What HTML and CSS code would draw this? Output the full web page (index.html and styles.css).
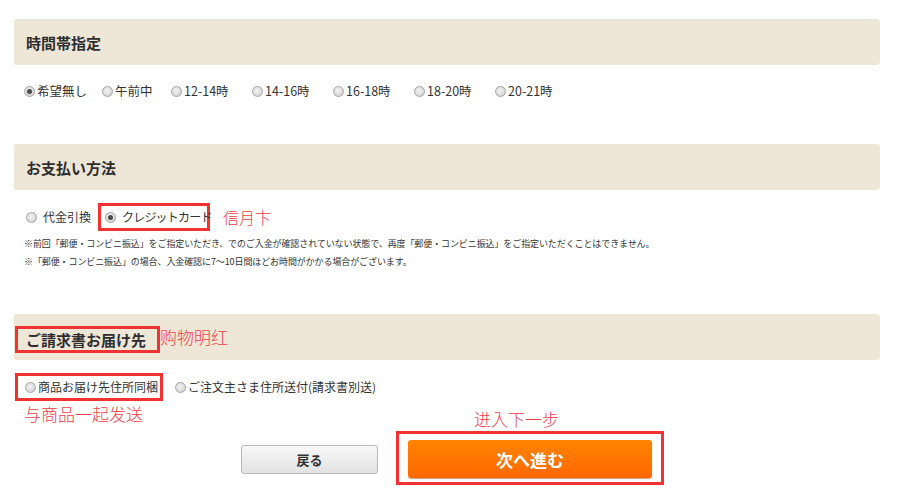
FILE: index.html
```html
<!DOCTYPE html>
<html lang="ja">
<head>
<meta charset="utf-8">
<link rel="stylesheet" href="styles.css">
</head>
<body>
<div class="page">
  <div class="hdr">時間帯指定</div>
  <div class="times">
    <label class="opt"><span class="radio on"></span>希望無し</label>
    <label class="opt"><span class="radio"></span>午前中</label>
    <label class="opt"><span class="radio"></span>12-14時</label>
    <label class="opt"><span class="radio"></span>14-16時</label>
    <label class="opt"><span class="radio"></span>16-18時</label>
    <label class="opt"><span class="radio"></span>18-20時</label>
    <label class="opt"><span class="radio"></span>20-21時</label>
  </div>

  <div class="hdr">お支払い方法</div>
  <div class="pay">
    <label class="opt sp"><span class="radio"></span>代金引換</label>
    <div class="mark mark-card"><label class="opt sp"><span class="radio on"></span>クレジットカード</label></div>
    <span class="note-cn cn-card">信月卞</span>
  </div>
  <div class="notes">
    <p>※前回「郵便・コンビニ振込」をご指定いただき、でのご入金が確認されていない状態で、再度「郵便・コンビニ振込」をご指定いただくことはできません。</p>
    <p>※「郵便・コンビニ振込」の場合、入金確認に7～10日間ほどお時間がかかる場合がございます。</p>
  </div>

  <div class="hdr hdr-bill">
    <div class="mark mark-title">ご請求書お届け先</div>
    <span class="note-cn">购物明红</span>
  </div>
  <div class="bill">
    <div class="mark mark-bill"><label class="opt"><span class="radio"></span>商品お届け先住所同梱</label></div>
    <label class="opt"><span class="radio"></span>ご注文主さま住所送付(請求書別送)</label>
  </div>
  <div class="note-cn cn-bill">与商品一起发送</div>

  <div class="actions">
    <button class="btn-back">戻る</button>
    <div class="mark mark-next">
      <span class="note-cn cn-next">进入下一步</span>
      <button class="btn-next">次へ進む</button>
    </div>
  </div>
</div>
</body>
</html>
```

FILE: styles.css
```css
* { box-sizing: border-box; }
body {
  margin: 0;
  background: #fff;
  color: #333;
  font-family: "Noto Sans CJK JP", "Noto Sans", sans-serif;
}
p { margin: 0; }
.page {
  width: 900px;
  padding: 19px 20px 0 14px;
}
.hdr {
  height: 46px;
  background: #eee6d6;
  border-radius: 2px 4px 4px 2px;
  display: flex;
  align-items: center;
  padding-left: 12px;
  font-size: 15px;
  font-weight: 700;
  color: #2e2e2e;
}
.opt {
  display: inline-flex;
  align-items: center;
  font-size: 12px;
  line-height: 18px;
  color: #333;
  white-space: nowrap;
}
.opt.sp .radio { margin-right: 6px; }
.radio {
  width: 11px;
  height: 11px;
  border-radius: 50%;
  border: 1px solid #a8a8a8;
  background: radial-gradient(circle at 45% 40%, #f4f4f4 0%, #d6d6d6 70%, #c4c4c4 100%);
  margin-right: 2px;
  position: relative;
  flex: none;
}
.radio.on::after {
  content: "";
  position: absolute;
  left: 2px;
  top: 2px;
  width: 5px;
  height: 5px;
  border-radius: 50%;
  background: #4a4a4a;
}
.times {
  display: grid;
  grid-template-columns: 78px 69px 81px 81px 81px 81px auto;
  padding-left: 10px;
  margin: 17px 0 44px;
  height: 18px;
}
.times .opt { font-size: 12.5px; }
.pay {
  display: flex;
  align-items: center;
  height: 28px;
  margin-top: 13px;
  padding-left: 12px;
}
.mark {
  border: 3px solid #f03232;
}
.mark-card {
  height: 28px;
  width: 112px;
  margin-left: 7px;
  display: flex;
  align-items: center;
  padding-left: 4px;
}
.mark-card .opt { letter-spacing: -0.8px; }
.note-cn {
  color: #f2404a;
  font-family: "Noto Sans CJK SC", sans-serif;
  font-weight: 300;
  font-size: 17px;
  line-height: 20px;
}
.cn-card { margin-left: 13px; font-size: 16px; }
.notes {
  margin-top: 4px;
  padding-left: 10px;
  font-size: 9px;
  line-height: 18px;
  color: #333;
  letter-spacing: -0.1px;
}
.hdr-bill {
  margin-top: 43px;
  padding-left: 1px;
}
.mark-title {
  height: 27px;
  padding: 0 11px 0 8px;
  display: flex;
  align-items: center;
  margin-top: 4px;
}
.bill {
  display: flex;
  align-items: center;
  margin-top: 13px;
  height: 28px;
  padding-left: 1px;
}
.mark-bill {
  height: 28px;
  width: 148px;
  display: flex;
  align-items: center;
  padding-left: 7px;
  margin-right: 12px;
}
.cn-bill {
  margin-top: 3px;
  padding-left: 10px;
}
.actions {
  display: flex;
  align-items: center;
  margin-top: 7px;
  padding-left: 227px;
}
.btn-back {
  width: 137px;
  height: 29px;
  border: 1px solid #b9b9b9;
  border-radius: 3px;
  background: linear-gradient(#f8f8f8, #e2e2e2);
  font-family: "Noto Sans CJK JP", sans-serif;
  font-size: 13px;
  font-weight: 700;
  color: #333;
  margin-top: 2px;
  padding: 0;
}
.mark-next {
  position: relative;
  width: 268px;
  height: 54px;
  margin-left: 18px;
  padding: 6px 9px 4px 9px;
}
.cn-next {
  position: absolute;
  left: 75px;
  top: -25px;
  white-space: nowrap;
}
.btn-next {
  width: 244px;
  height: 38px;
  border: none;
  border-radius: 3px;
  background: linear-gradient(#ff8400, #ff6800);
  box-shadow: 0 1px 1px rgba(150, 60, 0, 0.5);
  font-family: "Noto Sans CJK JP", sans-serif;
  font-size: 17px;
  font-weight: 700;
  color: #fff;
  padding: 0;
  display: block;
}
```
